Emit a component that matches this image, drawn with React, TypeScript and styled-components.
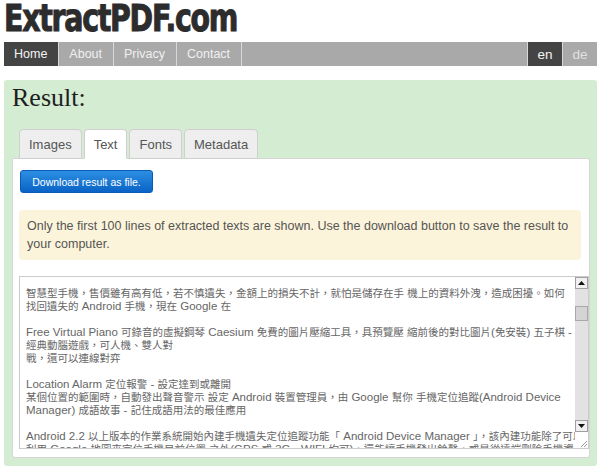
import React from "react";
import styled, { createGlobalStyle } from "styled-components";

const Global = createGlobalStyle`
  html, body { margin: 0; padding: 0; background: #fff; }
  body { font-family: "Liberation Sans", Arial, sans-serif; width: 600px; height: 470px; overflow: hidden; }
`;

const Page = styled.div`
  padding: 0 3px 0 4px;
  display: flex;
  flex-direction: column;
`;

const Logo = styled.div`
  font-family: "DejaVu Sans Condensed", "DejaVu Sans", sans-serif;
  font-weight: bold;
  font-size: 38px;
  line-height: 36px;
  height: 42px;
  color: #2c2c2c;
  letter-spacing: -1.5px;
  -webkit-text-stroke: 1px #2c2c2c;
  transform-origin: left top;
  transform: scaleX(0.83);
  white-space: nowrap;
`;

const Nav = styled.div`
  display: flex;
  height: 24px;
  background: #a9a9a9;
  margin-bottom: 14px;
`;

const NavItem = styled.div<{ $active?: boolean; $last?: boolean }>`
  display: flex;
  align-items: center;
  padding: 0 11px 0 10px;
  font-size: 12.5px;
  color: ${(p) => (p.$active ? "#f4f4f4" : "#f0f0f0")};
  background: ${(p) => (p.$active ? "#444444" : "#a9a9a9")};
  border-right: 1px solid #d8d8d8;
`;

const Spacer = styled.div`
  flex: 1;
  border-right: 1px solid #d8d8d8;
`;

const LangItem = styled(NavItem)`
  width: 34px;
  padding: 0;
  justify-content: center;
  font-size: 13.5px;
  color: ${(p) => (p.$active ? "#f4f4f4" : "#e2e2e2")};
  border-right: ${(p) => (p.$last ? "none" : "1px solid #d8d8d8")};
`;

const Panel = styled.div`
  background: #d4ecd1;
  border-radius: 3px;
  padding: 3px 7px 8px 8px;
  height: 375px;
  display: flex;
  flex-direction: column;
`;

const Title = styled.h1`
  margin: 0;
  font-family: "Liberation Serif", "Times New Roman", serif;
  font-weight: normal;
  font-size: 26px;
  line-height: 30px;
  color: #1e1e1e;
  height: 46px;
`;

const Tabs = styled.div`
  display: flex;
  gap: 2px;
  padding-left: 7px;
  position: relative;
  z-index: 1;
  margin-bottom: -1px;
`;

const Tab = styled.div<{ $active?: boolean }>`
  height: 28px;
  padding: 0 9px;
  display: flex;
  align-items: center;
  font-size: 13px;
  color: #555;
  background: ${(p) => (p.$active ? "#ffffff" : "#eeeeee")};
  border: 1px solid #cfcfcf;
  border-bottom: ${(p) => (p.$active ? "1px solid #ffffff" : "1px solid #cfcfcf")};
  border-radius: 4px 4px 0 0;
`;

const Content = styled.div`
  flex: 1;
  background: #fff;
  border: 1px solid #d6d6d6;
  border-radius: 0 3px 3px 3px;
  padding: 11px 0 8px 6px;
  display: flex;
  flex-direction: column;
`;

const Button = styled.div`
  align-self: flex-start;
  margin-left: 1px;
  width: 133px;
  height: 23px;
  box-sizing: border-box;
  border-radius: 3px;
  background: linear-gradient(#2c8fe2, #0a63c6);
  border: 1px solid #0a5bb5;
  color: #fff;
  font-size: 10.5px;
  display: flex;
  align-items: center;
  justify-content: center;
  margin-bottom: 17px;
`;

const Notice = styled.div`
  margin-right: 8px;
  background: #fcf4da;
  border-radius: 4px;
  padding: 7px 8px 7px 8px;
  font-size: 12.5px;
  line-height: 18px;
  color: #555;
  margin-bottom: 16px;
`;

const TextBox = styled.div`
  height: 173px;
  box-sizing: border-box;
  border: 1px solid #cccccc;
  display: flex;
  overflow: hidden;
`;

const TextInner = styled.div`
  flex: 1;
  overflow: hidden;
  padding: 9px 0 0 6px;
  font-family: "Liberation Sans", "Noto Sans CJK TC", sans-serif;
  font-size: 11.5px;
  line-height: 13px;
  color: #666;
  white-space: nowrap;
`;

const Line = styled.div`
  height: 13px;
`;

const Cjk = styled.span`
  font-family: "Noto Sans CJK TC", sans-serif;
  font-size: 10.5px;
`;

const ScrollCol = styled.div`
  width: 13px;
  display: flex;
  flex-direction: column;
`;

const Track = styled.div`
  flex: 1;
  background: #e2e2e2;
  display: flex;
  flex-direction: column;
  padding-top: 17px;
`;

const Arrow = styled.div`
  height: 12px;
  box-sizing: border-box;
  background: #f0f0f0;
  border: 1px solid #a0a0a0;
  display: flex;
  align-items: center;
  justify-content: center;
`;

const Thumb = styled.div`
  height: 15px;
  box-sizing: border-box;
  background: #d4d4d4;
  border: 1px solid #a8a8a8;
`;

const Corner = styled.div`
  height: 16px;
  background: #fff;
  display: flex;
  align-items: flex-end;
  justify-content: flex-end;
`;

const Up = () => (
  <svg width="7" height="4" viewBox="0 0 7 4"><path d="M0 4 L3.5 0 L7 4 Z" fill="#111" /></svg>
);
const Down = () => (
  <svg width="7" height="4" viewBox="0 0 7 4"><path d="M0 0 L3.5 4 L7 0 Z" fill="#111" /></svg>
);
const Grip = () => (
  <svg width="8" height="8" viewBox="0 0 8 8">
    <path d="M7 1 L1 7 M7 4 L4 7" stroke="#9a9a9a" strokeWidth="1" />
  </svg>
);

const lines: string[] = [
  "智慧型手機，售價雖有高有低，若不慎遺失，金額上的損失不計，就怕是儲存在手 機上的資料外洩，造成困擾。如何",
  "找回遺失的 Android 手機，現在 Google 在",
  "",
  "Free Virtual Piano 可錄音的虛擬鋼琴 Caesium 免費的圖片壓縮工具，具預覽壓 縮前後的對比圖片(免安裝) 五子棋 -",
  "經典動腦遊戲，可人機、雙人對",
  "戰，還可以連線對弈",
  "",
  "Location Alarm 定位報警 - 設定達到或離開",
  "某個位置的範圍時，自動發出聲音警示 設定 Android 裝置管理員，由 Google 幫你 手機定位追蹤(Android Device",
  "Manager) 成語故事 - 記住成語用法的最佳應用",
  "",
  "Android 2.2 以上版本的作業系統開始內建手機遺失定位追蹤功能「 Android Device Manager 」，該內建功能除了可以",
  "利用 Google 地圖來定位手機目前位置 之外(GPS 或 3G、WIFI 均可)，還能讓手機發出鈴聲，或是從遠端刪除手機資",
];

const cjkRe = /([\u3000-\u303f\u3400-\u9fff\uff00-\uffef]+)/;

function renderLine(text: string) {
  return text.split(cjkRe).map((part, i) =>
    i % 2 === 1 ? <Cjk key={i}>{part}</Cjk> : <React.Fragment key={i}>{part}</React.Fragment>
  );
}

export default function App() {
  return (
    <>
      <Global />
      <Page>
        <Logo>ExtractPDF.com</Logo>
        <Nav>
          <NavItem $active>Home</NavItem>
          <NavItem>About</NavItem>
          <NavItem>Privacy</NavItem>
          <NavItem>Contact</NavItem>
          <Spacer />
          <LangItem $active>en</LangItem>
          <LangItem $last>de</LangItem>
        </Nav>
        <Panel>
          <Title>Result:</Title>
          <Tabs>
            <Tab>Images</Tab>
            <Tab $active>Text</Tab>
            <Tab>Fonts</Tab>
            <Tab>Metadata</Tab>
          </Tabs>
          <Content>
            <Button>Download result as file.</Button>
            <Notice>
              Only the first 100 lines of extracted texts are shown. Use the download button to save the result to
              your computer.
            </Notice>
            <TextBox>
              <TextInner>
                {lines.map((l, i) => (
                  <Line key={i}>{renderLine(l)}</Line>
                ))}
              </TextInner>
              <ScrollCol>
                <Arrow><Up /></Arrow>
                <Track>
                  <Thumb />
                </Track>
                <Arrow><Down /></Arrow>
                <Corner><Grip /></Corner>
              </ScrollCol>
            </TextBox>
          </Content>
        </Panel>
      </Page>
    </>
  );
}
